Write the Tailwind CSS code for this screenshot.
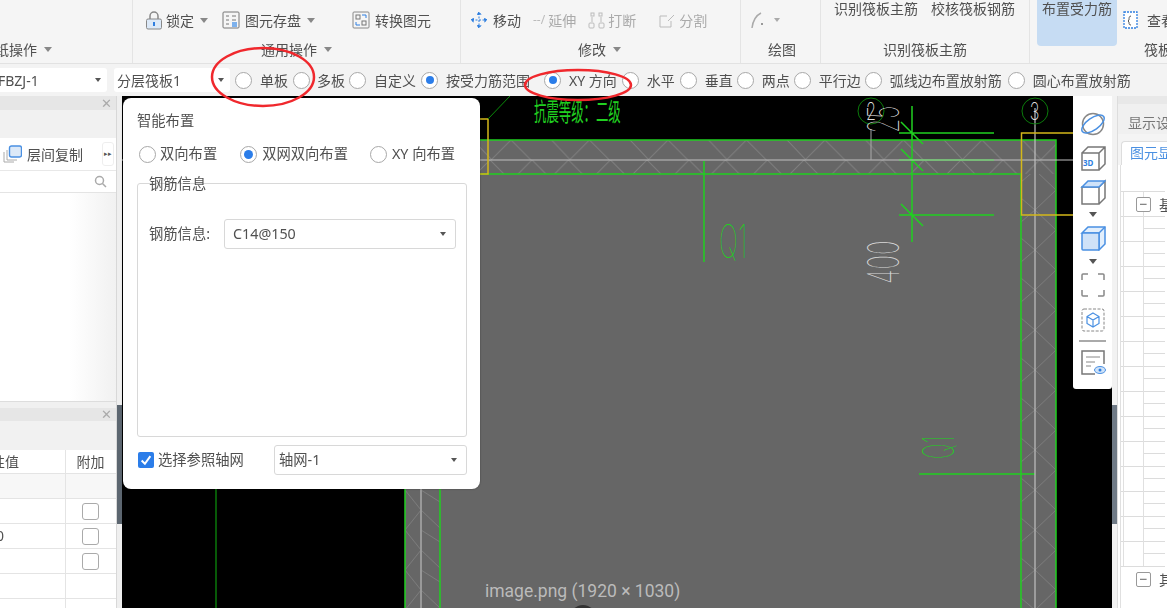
<!DOCTYPE html>
<html lang="zh-CN">
<head>
<meta charset="UTF-8">
<title>智能布置</title>
<script src="https://cdn.jsdelivr.net/npm/@tailwindcss/browser@4"></script>
</head>
<body class="bg-black overflow-hidden">
<div class="relative w-[1167px] h-[608px] overflow-hidden font-['Noto_Sans','Noto_Sans_CJK_SC',sans-serif] text-[14px] text-[#505050] blur-[0.5px]">

  <!-- 功能区 -->
  <div class="flex h-[64px] bg-[#f5f5f5] border-b border-[#e2e2e2]">
    <div class="w-[133px] shrink-0 border-r border-[#e4e4e4] flex flex-col">
      <div class="h-[40px]"></div>
      <div class="flex items-center h-[18px] gap-[7px] -ml-[5px]"><span>纸操作</span><span class="border-x-[4px] border-x-transparent border-t-[5px] border-t-[#888]"></span></div>
    </div>
    <div class="w-[328px] shrink-0 border-r border-[#e4e4e4] flex flex-col">
      <div class="h-[40px] flex items-center pl-[12px]">
        <svg class="w-[18px] h-[19px]" viewBox="0 0 18 19"><path d="M5 8V5a4 4 0 0 1 8 0v3" fill="none" stroke="#888" stroke-width="1.500"/><rect x="1.500" y="8" width="15" height="10" rx="1.500" fill="#dce9f8" stroke="#888"/><rect x="8" y="11" width="2" height="4" fill="#2f7fe0"/></svg>
        <span class="ml-[3px]">锁定</span>
        <span class="ml-[6px] border-x-[4px] border-x-transparent border-t-[5px] border-t-[#888]"></span>
        <svg class="ml-[14px] w-[18px] h-[18px]" viewBox="0 0 18 18"><rect x="1" y="1" width="16" height="16" rx="1" fill="none" stroke="#777"/><path d="M4 5h3M4 9h3M4 13h3M10 5h4M10 9h4" stroke="#777"/><rect x="10" y="11" width="5" height="5" fill="#7db1ec"/></svg>
        <span class="ml-[5px]">图元存盘</span>
        <span class="ml-[6px] border-x-[4px] border-x-transparent border-t-[5px] border-t-[#888]"></span>
        <svg class="ml-[37px] w-[18px] h-[18px]" viewBox="0 0 18 18"><rect x="1" y="1" width="16" height="16" rx="1" fill="none" stroke="#888"/><rect x="4" y="4" width="4" height="4" fill="none" stroke="#777"/><rect x="10" y="10" width="4" height="4" fill="none" stroke="#777"/><path d="M10 4h4v3M8 14H4v-3" fill="none" stroke="#2f7fe0"/></svg>
        <span class="ml-[5px]">转换图元</span>
      </div>
      <div class="flex items-center justify-center h-[18px] gap-[7px]"><span>通用操作</span><span class="border-x-[4px] border-x-transparent border-t-[5px] border-t-[#888]"></span></div>
    </div>
    <div class="w-[280px] shrink-0 border-r border-[#e4e4e4] flex flex-col">
      <div class="h-[40px] flex items-center pl-[9px]">
        <svg class="w-[18px] h-[18px]" viewBox="0 0 18 18"><path d="M9 2v14M2 9h14M9 1 7 3.500h4zM9 17l-2-2.500h4zM1 9l2.500-2v4zM17 9l-2.500-2v4z" fill="#2f7fe0" stroke="#2f7fe0" stroke-dasharray="2 1.500"/></svg>
        <span class="ml-[5px]">移动</span>
        <span class="ml-[12px] text-[#bbb] text-[12px]">--/</span>
        <span class="ml-[3px] text-[#aaa]">延伸</span>
        <svg class="ml-[12px] w-[17px] h-[17px]" viewBox="0 0 17 17"><g fill="none" stroke="#bbb"><rect x="1" y="11" width="5" height="5" rx="1"/><rect x="11" y="11" width="5" height="5" rx="1"/><rect x="3" y="1" width="3" height="3"/><rect x="11" y="1" width="3" height="3"/><path d="M4 5v5M13 5v5"/></g></svg>
        <span class="ml-[3px] text-[#aaa]">打断</span>
        <svg class="ml-[22px] w-[17px] h-[17px]" viewBox="0 0 17 17"><path d="M9 4H2v11h11V9M10 9l6-6" fill="none" stroke="#bbb"/></svg>
        <span class="ml-[4px] text-[#aaa]">分割</span>
      </div>
      <div class="flex items-center h-[18px] gap-[7px] pl-[117px]"><span>修改</span><span class="border-x-[4px] border-x-transparent border-t-[5px] border-t-[#888]"></span></div>
    </div>
    <div class="w-[80px] shrink-0 border-r border-[#e4e4e4] flex flex-col">
      <div class="h-[40px] flex items-center pl-[9px]">
        <svg class="w-[20px] h-[20px]" viewBox="0 0 20 20"><path d="M2 18C3 10 7 5 11 3" fill="none" stroke="#aaa" stroke-width="1.500"/><rect x="11" y="13" width="2" height="2" fill="#999"/></svg>
        <span class="ml-[4px] border-x-[3px] border-x-transparent border-t-[4px] border-t-[#aaa]"></span>
      </div>
      <div class="h-[18px] flex items-center pl-[27px]">绘图</div>
    </div>
    <div class="w-[209px] shrink-0 border-r border-[#e4e4e4] flex flex-col">
      <div class="h-[40px] flex gap-[13px] pl-[13px] leading-[18px]"><span>识别筏板主筋</span><span>校核筏板钢筋</span></div>
      <div class="h-[18px] flex items-center justify-center">识别筏板主筋</div>
    </div>
    <div class="flex-1 min-w-0 flex flex-col pl-[7px] overflow-hidden">
      <div class="h-[40px] flex">
        <div class="w-[80px] h-[46px] bg-[#c6dcf3] rounded-b-[4px] text-center leading-[18px] shrink-0">布置受力筋</div>
        <div class="flex items-center ml-[6px]">
          <svg class="w-[15px] h-[18px] shrink-0" viewBox="0 0 15 18"><rect x="1" y="1" width="13" height="16" fill="#fff" stroke="#2f7fe0" stroke-width="1.300" stroke-dasharray="2 1"/><path d="M8 5C6 5 6 7 6 9L5 10l1 1c0 2 0 3 2 3" fill="none" stroke="#555"/></svg>
          <span class="ml-[9px] whitespace-nowrap">查看</span>
        </div>
      </div>
      <div class="h-[18px] flex items-center pl-[107px] whitespace-nowrap">筏板</div>
    </div>
  </div>

  <!-- 属性栏 -->
  <div class="flex items-center h-[32px] bg-[#f3f3f3] whitespace-nowrap">
    <div class="w-[109px] h-[24px] bg-white rounded-r-[3px] flex items-center justify-between pr-[6px] -ml-[2px]"><span>FBZJ-1</span><span class="border-x-[3px] border-x-transparent border-t-[4px] border-t-[#555]"></span></div>
    <div class="ml-[7px] w-[116px] h-[24px] bg-white rounded-[3px] flex items-center justify-between px-[3px] pr-[6px]"><span>分层筏板1</span><span class="border-x-[3px] border-x-transparent border-t-[4px] border-t-[#555]"></span></div>
    <div class="ml-[5px] flex items-center gap-[5px]">
      <label class="flex items-center gap-[8px]"><span class="w-[17px] h-[17px] rounded-full border border-[#a8a8a8] bg-white"></span>单板</label>
      <label class="flex items-center gap-[7px]"><span class="w-[17px] h-[17px] rounded-full border border-[#a8a8a8] bg-white"></span>多板</label>
      <label class="flex items-center gap-[8px] -ml-[1px]"><span class="w-[17px] h-[17px] rounded-full border border-[#a8a8a8] bg-white"></span>自定义</label>
      <label class="flex items-center gap-[8px]"><span class="w-[17px] h-[17px] rounded-full border border-[#a8a8a8] bg-white flex items-center justify-center"><span class="w-[8px] h-[8px] rounded-full bg-[#2b7de9]"></span></span>按受力筋范围</label>
      <label class="flex items-center gap-[8px] ml-[9px]"><span class="w-[17px] h-[17px] rounded-full border border-[#a8a8a8] bg-white flex items-center justify-center"><span class="w-[8px] h-[8px] rounded-full bg-[#2b7de9]"></span></span>XY 方向</label>
      <label class="flex items-center gap-[8px]"><span class="w-[17px] h-[17px] rounded-full border border-[#a8a8a8] bg-white"></span>水平</label>
      <label class="flex items-center gap-[8px]"><span class="w-[17px] h-[17px] rounded-full border border-[#a8a8a8] bg-white"></span>垂直</label>
      <label class="flex items-center gap-[8px] -ml-[1px]"><span class="w-[17px] h-[17px] rounded-full border border-[#a8a8a8] bg-white"></span>两点</label>
      <label class="flex items-center gap-[8px] -ml-[1px]"><span class="w-[17px] h-[17px] rounded-full border border-[#a8a8a8] bg-white"></span>平行边</label>
      <label class="flex items-center gap-[8px] -ml-[1px]"><span class="w-[17px] h-[17px] rounded-full border border-[#a8a8a8] bg-white"></span>弧线边布置放射筋</label>
      <label class="flex items-center gap-[8px] ml-[1px]"><span class="w-[17px] h-[17px] rounded-full border border-[#a8a8a8] bg-white"></span>圆心布置放射筋</label>
    </div>
  </div>

  <!-- 主区域 -->
  <div class="flex h-[512px]">
    <!-- 左侧面板 -->
    <div class="w-[117px] shrink-0 flex flex-col bg-[#f2f2f2] border-r border-[#d8d8d8]">
      <div class="h-[14px] bg-[#e6e6e6] flex items-center justify-end pr-[4px] text-[#aaa] text-[13px] leading-none">✕</div>
      <div class="h-[28px] bg-[#f1f1f1]"></div>
      <div class="h-[33px] bg-white border-b border-[#e8e8e8] flex items-center relative">
        <svg class="ml-[3px] w-[19px] h-[18px]" viewBox="0 0 19 18"><path d="M1 7v10h10" fill="none" stroke="#aaa"/><path d="M4 5v10h10" fill="none" stroke="#aaa"/><rect x="6.500" y="1" width="12" height="11" rx="2" fill="#dce9f8" stroke="#4a90e2" stroke-width="1.400"/></svg>
        <span class="ml-[5px]">层间复制</span>
        <span class="absolute right-[2px] top-[4px] w-[12px] h-[24px] bg-white border border-[#eee] rounded-[3px] text-[7px] text-[#555] flex items-center justify-center">▸▸</span>
      </div>
      <div class="h-[22px] bg-white border-b border-[#e4e4e4] flex items-center justify-end pr-[9px]">
        <svg class="w-[13px] h-[13px]" viewBox="0 0 13 13"><circle cx="5.500" cy="5.500" r="4" fill="none" stroke="#aaa" stroke-width="1.500"/><path d="M8.500 8.500 12 12" stroke="#aaa" stroke-width="1.500"/></svg>
      </div>
      <div class="h-[209px] bg-gradient-to-r from-white from-60% to-[#f1f1f1] border-b border-[#ddd]"></div>
      <div class="h-[6px] bg-[#f0f0f0]"></div>
      <div class="h-[13px] bg-[#e6e6e6] flex items-center justify-end pr-[4px] text-[#aaa] text-[13px] leading-none">✕</div>
      <div class="h-[29px] bg-[#f1f1f1]"></div>
      <div class="flex-1 bg-white flex flex-col">
        <div class="grid grid-cols-[66px_49px] h-[24px] border-b border-[#e4e4e4] leading-[24px]"><div class="pr-[46px] border-r border-[#e4e4e4] whitespace-nowrap overflow-hidden flex justify-end"><span class="shrink-0">性值</span></div><div class="text-center">附加</div></div>
        <div class="grid grid-cols-[66px_49px] h-[25px] border-b border-[#e4e4e4] bg-[#f7f7f7]"><div class="border-r border-[#e4e4e4]"></div><div></div></div>
        <div class="grid grid-cols-[66px_49px] h-[25px] border-b border-[#e4e4e4]"><div class="border-r border-[#e4e4e4]"></div><div class="flex items-center justify-center"><span class="w-[17px] h-[17px] border border-[#aaa] rounded-[3px]"></span></div></div>
        <div class="grid grid-cols-[66px_49px] h-[25px] border-b border-[#e4e4e4]"><div class="border-r border-[#e4e4e4] leading-[24px] -ml-[4px]">0</div><div class="flex items-center justify-center"><span class="w-[17px] h-[17px] border border-[#aaa] rounded-[3px]"></span></div></div>
        <div class="grid grid-cols-[66px_49px] h-[25px] border-b border-[#e4e4e4]"><div class="border-r border-[#e4e4e4]"></div><div class="flex items-center justify-center"><span class="w-[17px] h-[17px] border border-[#aaa] rounded-[3px]"></span></div></div>
        <div class="grid grid-cols-[66px_49px] h-[25px] border-b border-[#e4e4e4]"><div class="border-r border-[#e4e4e4]"></div><div></div></div>
        <div class="grid grid-cols-[66px_49px] flex-1"><div class="border-r border-[#e4e4e4]"></div><div></div></div>
      </div>
    </div>
    <div class="w-[5px] shrink-0 bg-[#efefef] pt-[309px]"><div class="h-[119px] bg-[#5c6670]"></div></div>

    <!-- 绘图区 -->
    <div class="relative w-[990px] shrink-0 bg-black">
      <svg class="absolute inset-0 w-[990px] h-[512px]" viewBox="122 96 990 512">
        <defs>
          <pattern id="hatchTopA" x="0" y="140" width="78.500" height="20" patternUnits="userSpaceOnUse">
            <path d="M40 0 20 20M40 0 60 20M2 0 21 20" stroke="#808080" fill="none"/>
          </pattern>
          <pattern id="hatchTopB" x="5" y="160" width="78.500" height="14" patternUnits="userSpaceOnUse">
            <path d="M0 14 14 0M14 0 28 14M42 14 56 0M56 0 70 14" stroke="#808080" fill="none"/>
          </pattern>
          <pattern id="hatchWall" x="1021" y="130" width="35" height="40" patternUnits="userSpaceOnUse">
            <path d="M0 12 14 0 35 20 14 40 0 28" stroke="#7c7c7c" fill="none"/>
          </pattern>
          <pattern id="hatchWallL" x="405" y="130" width="35" height="40" patternUnits="userSpaceOnUse">
            <path d="M0 0 16 20 0 40M35 12 16 0M16 20 35 38" stroke="#7c7c7c" fill="none"/>
          </pattern>
        </defs>
        <rect x="405" y="140" width="651" height="468" fill="#666"/>
        <rect x="405" y="140" width="651" height="20" fill="url(#hatchTopA)"/>
        <rect x="405" y="160" width="651" height="14" fill="url(#hatchTopB)"/>
        <rect x="1021" y="174" width="35" height="434" fill="url(#hatchWall)"/>
        <rect x="405" y="174" width="35" height="434" fill="url(#hatchWallL)"/>
        <path d="M216 489V608" stroke="#0b8a0b" stroke-width="1.300"/>
        <g fill="none" stroke="#20d020" stroke-width="1.500">
          <path d="M405 608V140H1056V608M440 608V174H1021V608"/>
          <path d="M704 161V262M912 106V242M899 133H994M899 160H994M899 215H994M901 122l22 22M901 149l22 22M901 204l22 22M919 474H1035"/>
        </g>
        <path d="M122 160H1112M1035 108V608" stroke="#c0c0c0" stroke-width="1.200" fill="none"/>
        <path d="M421 160V608" stroke="#999" stroke-width="2" fill="none"/>
        <path d="M871 129V160" stroke="#aaa"/>
        <g fill="none" stroke="#d4b81a" stroke-width="1.500"><path d="M440 119H488V174H440M1073 133H1021.500V215H1073"/></g>
        <path d="M488 119 510 96" stroke="#0a8a0a" fill="none"/>
        <circle cx="871" cy="111" r="13" fill="none" stroke="#0b7a0b"/>
        <circle cx="1035" cy="111" r="13" fill="none" stroke="#0b7a0b"/>
        <text x="871" y="120" text-anchor="middle" font-family="Inter" font-size="24" font-weight="200" fill="#ddd" transform="translate(283 0) scale(0.675 1)">2</text>
        <text x="1035" y="120" text-anchor="middle" font-family="Inter" font-size="24" font-weight="200" fill="#ddd" transform="translate(336 0) scale(0.675 1)">3</text>
        <text font-family="Inter" font-size="46" font-weight="100" fill="#20d020" transform="translate(719 258) scale(0.55 1)">Q1</text>
        <text font-family="Inter" font-size="46" font-weight="100" fill="#d8d8d8" transform="translate(899 284) rotate(-90) scale(0.53 0.95)">400</text>
        <text font-family="Inter" font-size="46" font-weight="100" fill="#d8d8d8" transform="translate(899 133) rotate(-90) scale(0.5 0.95)">25</text>
        <text font-family="Inter" font-size="46" font-weight="100" fill="#20d020" transform="translate(954 459) rotate(-90) scale(0.45 0.95)">Q1</text>
        <text font-family="Noto Sans CJK SC" font-size="20" fill="#20d020" transform="translate(534 121) scale(0.62 1.25)">抗震等级：二级</text>
      </svg>

      <!-- 右侧视图工具条 -->
      <div class="absolute right-0 top-0 w-[39px] h-[293px] bg-white rounded-b-[3px] flex flex-col items-center pt-[15px]">
        <svg class="w-[26px] h-[26px]" viewBox="0 0 26 26"><circle cx="13" cy="13" r="10.500" fill="none" stroke="#888" stroke-width="1.500"/><ellipse cx="13" cy="13" rx="13" ry="6" transform="rotate(-35 13 13)" fill="none" stroke="#4a90e2" stroke-width="1.500"/></svg>
        <svg class="mt-[8px] w-[26px] h-[26px]" viewBox="0 0 26 26"><path d="M2 8h17v17H2zM2 8l6-6h17v17l-6 6M19 8l6-6" fill="none" stroke="#777" stroke-width="1.500"/><text x="3" y="21" font-family="Noto Sans" font-size="8" font-weight="700" fill="#2f7fe0">3D</text></svg>
        <svg class="mt-[8px] w-[26px] h-[26px]" viewBox="0 0 26 26"><path d="M2 8h17v17H2zM19 8l6-6v17l-6 6" fill="none" stroke="#777" stroke-width="1.500"/><path d="M2 8l6-6h17l-6 6z" fill="#cfe2f8" stroke="#4a90e2" stroke-width="1.500"/></svg>
        <span class="mt-[7px] border-x-[4px] border-x-transparent border-t-[5px] border-t-[#555]"></span>
        <svg class="mt-[8px] w-[26px] h-[26px]" viewBox="0 0 26 26"><path d="M2 8l6-6h17v17l-6 6V8z" fill="#e3effc" stroke="#4a90e2" stroke-width="1.500"/><rect x="2" y="8" width="17" height="17" rx="1" fill="#cfe2f8" stroke="#4a90e2" stroke-width="1.500"/><path d="M19 8l6-6" stroke="#4a90e2" stroke-width="1.500"/></svg>
        <span class="mt-[8px] border-x-[4px] border-x-transparent border-t-[5px] border-t-[#555]"></span>
        <svg class="mt-[9px] w-[24px] h-[24px]" viewBox="0 0 24 24"><path d="M1 7V2a1 1 0 0 1 1-1h5M17 1h5a1 1 0 0 1 1 1v5M23 17v5a1 1 0 0 1-1 1h-5M7 23H2a1 1 0 0 1-1-1v-5" fill="none" stroke="#888" stroke-width="1.500"/></svg>
        <svg class="mt-[11px] w-[24px] h-[24px]" viewBox="0 0 24 24"><rect x="1" y="1" width="22" height="22" rx="2" fill="none" stroke="#888" stroke-dasharray="3 1.500"/><path d="M12 5l6 3.500v7L12 19l-6-3.500v-7zM6 8.500l6 3.500 6-3.500M12 12v7" fill="none" stroke="#4a90e2" stroke-width="1.200"/></svg>
        <div class="mt-[8px] w-[27px] h-[2px] bg-[#aaa]"></div>
        <svg class="mt-[8px] w-[26px] h-[26px]" viewBox="0 0 26 26"><path d="M15 24H2V1h22v13" fill="none" stroke="#777" stroke-width="1.500"/><path d="M6 7h14M6 12h9M6 16h5" stroke="#888"/><ellipse cx="20" cy="20" rx="5.500" ry="3.500" fill="#cfe2f8" stroke="#4a90e2"/><circle cx="20" cy="20" r="1.500" fill="#2f7fe0"/></svg>
      </div>

      <div class="absolute left-[363px] top-[482px] text-[#bbb] text-[17.500px] font-['Roboto',sans-serif] whitespace-nowrap">image.png (1920 × 1030)</div>
      <div class="absolute left-[448px] top-[509px] w-[26px] h-[26px] rounded-full bg-[#333]"></div>
    </div>
    <div class="w-[5px] shrink-0 bg-[#f2f2f2] pt-[309px]"><div class="h-[119px] bg-[#6f7a86]"></div></div>

    <!-- 右侧面板 -->
    <div class="flex-1 min-w-0 bg-white flex flex-col overflow-hidden border-l border-[#ddd]">
      <div class="h-[38px] bg-[#f0f0f0] pt-[8px] pl-[10px] whitespace-nowrap text-[#777] border-t-[8px] border-[#e8e8e8]">显示设</div>
      <div class="h-[31px] bg-[#f4f4f4] pl-[3px] pt-[7px]"><div class="h-[24px] bg-white border-t border-l border-[#ddd] rounded-tl-[4px] text-[#4a90e2] pl-[8px] whitespace-nowrap leading-[22px]">图元显</div></div>
      <div class="flex-1 mx-[2px] border-l border-[#e0e0e0] relative">
        <div class="absolute left-[2px] top-[27px] bottom-[37px] w-[21px] border-x border-[#e0e0e0]"></div>
        <div class="h-[26px]"></div>
        <div class="relative flex h-[25px] border-t border-[#dcdcdc] items-center pl-[15px] gap-[8px] whitespace-nowrap"><span class="w-[15px] h-[15px] bg-white border border-[#999] rounded-[2px] flex items-center justify-center text-[#666] leading-none shrink-0">−</span>基</div>
        <div class="h-[25px] border-t border-[#dcdcdc] pl-[23px] pt-[11px]"><div class="h-px bg-[#dcdcdc]"></div></div>
        <div class="h-[25px] border-t border-[#dcdcdc] pl-[23px] pt-[11px]"><div class="h-px bg-[#dcdcdc]"></div></div>
        <div class="h-[25px] border-t border-[#dcdcdc] pl-[23px] pt-[11px]"><div class="h-px bg-[#dcdcdc]"></div></div>
        <div class="h-[25px] border-t border-[#dcdcdc] pl-[23px] pt-[11px]"><div class="h-px bg-[#dcdcdc]"></div></div>
        <div class="h-[25px] border-t border-[#dcdcdc] pl-[23px] pt-[11px]"><div class="h-px bg-[#dcdcdc]"></div></div>
        <div class="h-[25px] border-t border-[#dcdcdc] pl-[23px] pt-[11px]"><div class="h-px bg-[#dcdcdc]"></div></div>
        <div class="h-[25px] border-t border-[#dcdcdc] pl-[23px] pt-[11px]"><div class="h-px bg-[#dcdcdc]"></div></div>
        <div class="h-[25px] border-t border-[#dcdcdc] pl-[23px] pt-[11px]"><div class="h-px bg-[#dcdcdc]"></div></div>
        <div class="h-[25px] border-t border-[#dcdcdc] pl-[23px] pt-[11px]"><div class="h-px bg-[#dcdcdc]"></div></div>
        <div class="h-[25px] border-t border-[#dcdcdc] pl-[23px] pt-[11px]"><div class="h-px bg-[#dcdcdc]"></div></div>
        <div class="h-[25px] border-t border-[#dcdcdc] pl-[23px] pt-[11px]"><div class="h-px bg-[#dcdcdc]"></div></div>
        <div class="h-[25px] border-t border-[#dcdcdc] pl-[23px] pt-[11px]"><div class="h-px bg-[#dcdcdc]"></div></div>
        <div class="h-[25px] border-t border-[#dcdcdc] pl-[23px] pt-[11px]"><div class="h-px bg-[#dcdcdc]"></div></div>
        <div class="h-[25px] border-t border-[#dcdcdc] pl-[23px] pt-[11px]"><div class="h-px bg-[#dcdcdc]"></div></div>
        <div class="relative flex h-[25px] border-t border-[#dcdcdc] bg-white items-center pl-[15px] gap-[8px] whitespace-nowrap"><span class="w-[15px] h-[15px] border border-[#999] rounded-[2px] flex items-center justify-center text-[#666] leading-none shrink-0">−</span>其</div>
      </div>
    </div>
  </div>

  <!-- 智能布置弹窗 -->
  <div class="absolute left-[123px] top-[98px] w-[357px] h-[391px] bg-white rounded-[8px] shadow-[0_0_2px_rgba(0,0,0,0.4)] pl-[14px] pr-[13px] flex flex-col text-[14.300px]">
    <div class="mt-[12px] leading-[21px]">智能布置</div>
    <div class="mt-[13px] flex items-center h-[20px] whitespace-nowrap">
      <label class="ml-[2px] flex items-center gap-[4px]"><span class="w-[17px] h-[17px] rounded-full border border-[#a8a8a8]"></span>双向布置</label>
      <label class="ml-[23px] flex items-center gap-[5px]"><span class="w-[17px] h-[17px] rounded-full border border-[#a8a8a8] flex items-center justify-center"><span class="w-[9px] h-[9px] rounded-full bg-[#2b7de9]"></span></span>双网双向布置</label>
      <label class="ml-[22px] flex items-center gap-[5px]"><span class="w-[17px] h-[17px] rounded-full border border-[#a8a8a8]"></span>XY 向布置</label>
    </div>
    <div class="relative mt-[19px] h-[254px] border border-[#d8d8d8] rounded-[3px] pl-[11px] pr-[10px]">
      <span class="absolute left-[11px] -top-[11px] leading-[21px]">钢筋信息</span>
      <div class="flex items-center mt-[35px]">
        <span class="w-[75px] shrink-0 whitespace-nowrap">钢筋信息:</span>
        <div class="w-[232px] h-[30px] border border-[#d8d8d8] rounded-[3px] flex items-center justify-between pl-[8px] pr-[9px]"><span>C14@150</span><span class="border-x-[3px] border-x-transparent border-t-[4px] border-t-[#555]"></span></div>
      </div>
    </div>
    <div class="mt-[8px] flex items-center h-[30px] whitespace-nowrap">
      <span class="w-[16px] h-[16px] ml-[1px] rounded-[2px] bg-[#2b7de9] flex items-center justify-center shrink-0">
        <svg class="w-[12px] h-[12px]" viewBox="0 0 11 11"><path d="M1.500 6 4.500 9 9.500 2" fill="none" stroke="#fff" stroke-width="1.800"/></svg>
      </span>
      <span class="ml-[4px] w-[86px] shrink-0">选择参照轴网</span>
      <div class="ml-[30px] w-[193px] shrink-0 h-[30px] border border-[#d8d8d8] rounded-[3px] flex items-center justify-between pl-[4px] pr-[9px]"><span>轴网-1</span><span class="border-x-[3px] border-x-transparent border-t-[4px] border-t-[#555]"></span></div>
    </div>
  </div>

  <!-- 红色标注圈 -->
  <svg class="absolute inset-0 w-[1167px] h-[608px] pointer-events-none" viewBox="0 0 1167 608">
    <ellipse cx="263" cy="77" rx="51" ry="29" fill="none" stroke="#f0282d" stroke-width="2.500"/>
    <ellipse cx="578" cy="85" rx="53" ry="15" fill="none" stroke="#f0282d" stroke-width="2.500"/>
  </svg>
</div>
</body>
</html>
